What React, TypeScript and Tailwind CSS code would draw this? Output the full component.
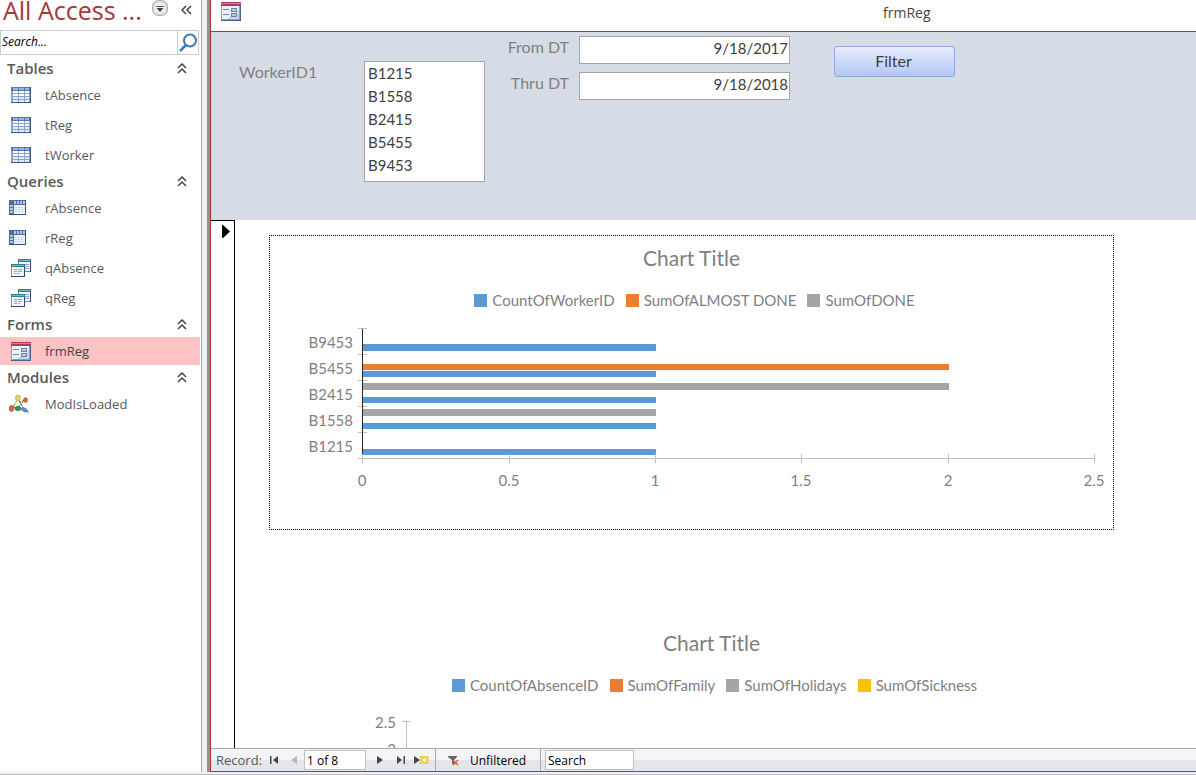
import type { ReactNode } from 'react'

const BLUE = '#5b9bd5'
const ORANGE = '#ed7d31'
const GREY = '#a5a5a5'
const YELLOW = '#ffc000'

function TableIcon() {
  return (
    <svg width="20" height="16" shapeRendering="crispEdges">
      <rect width="20" height="16" fill="#8ba3c7" />
      <rect width="20" height="4" fill="#5677ae" />
      <rect x="2" y="1" width="5" height="2" fill="#9db4db" />
      <rect x="8" y="1" width="5" height="2" fill="#9db4db" />
      <rect x="14" y="1" width="4" height="2" fill="#9db4db" />
      {[4, 7, 10, 13].map((y, i) => (
        <g key={y} fill={i > 1 ? '#e3ebf6' : '#ffffff'}>
          <rect x="2" y={y} width="5" height="2" />
          <rect x="8" y={y} width="5" height="2" />
          <rect x="14" y={y} width="4" height="2" />
        </g>
      ))}
      <rect x="19" width="1" height="16" fill="#3c5785" />
      <rect y="15" width="20" height="1" fill="#3c5785" />
    </svg>
  )
}

function CrosstabIcon() {
  return (
    <svg width="20" height="16" shapeRendering="crispEdges">
      <rect width="17" height="15" fill="#4e6da4" />
      {[5, 8, 11, 14].map(x => <rect key={x} x={x} y="1" width="2" height="3" fill="#b6c7e4" />)}
      {[5, 8, 11].map(y => <rect key={y} x="1" y={y} width="3" height="2" fill="#b6c7e4" />)}
      <rect x="5" y="5" width="11" height="9" fill="#eef3fb" />
      {[6, 9, 12].map(x => [7, 9, 11].map(y => <rect key={x + '-' + y} x={x} y={y} width="2" height="1" fill="#c3d0e8" />))}
      <rect x="16" width="1" height="15" fill="#34517f" />
      <rect y="14" width="17" height="1" fill="#34517f" />
    </svg>
  )
}

function QueryIcon() {
  return (
    <svg width="20" height="18" shapeRendering="crispEdges">
      <rect x="7" width="13" height="13" fill="#6a86b4" />
      <rect x="8" y="3" width="11" height="9" fill="#f3f7fc" />
      <rect x="7" width="13" height="3" fill="#2f8289" />
      <rect x="8" y="1" width="11" height="1" fill="#72b6ba" />
      <path d="M13 5h5v1h-5zM14 7h4v1h-4zM14 9h4v1h-4z" fill="#8ea5cb" />
      <rect x="19" y="3" width="1" height="10" fill="#2f4a78" />
      <rect y="5" width="14" height="13" fill="#7b95bf" />
      <rect x="1" y="8" width="12" height="9" fill="#f3f7fc" />
      <rect y="5" width="14" height="3" fill="#2f8289" />
      <rect x="1" y="6" width="12" height="1" fill="#72b6ba" />
      <path d="M3 10h3v1H3zM7 10h4v1H7zM3 12h3v1H3zM7 12h4v1H7zM3 14h3v1H3zM7 14h2v1H7z" fill="#8ea5cb" />
      <path d="M13 8h1v10H0v-1h13z" fill="#2f4a78" />
    </svg>
  )
}

function FormIcon() {
  return (
    <svg width="20" height="19" shapeRendering="crispEdges">
      <rect width="20" height="19" fill="#8b9dbf" />
      <rect x="1" y="4" width="17" height="13" fill="#edf2fa" />
      <path d="M18 8v9H6z" fill="#c9d7ee" />
      <rect width="20" height="4" fill="#b5365f" />
      <rect y="1" width="20" height="1" fill="#dd7d9b" />
      <rect x="2" y="7" width="6" height="1" fill="#7187b0" />
      <rect x="2" y="12" width="6" height="1" fill="#7187b0" />
      <rect x="10" y="6" width="6" height="4" fill="#6b83ae" />
      <rect x="11" y="7" width="4" height="2" fill="#b9c9e2" />
      <rect x="10" y="11" width="6" height="4" fill="#6b83ae" />
      <rect x="11" y="12" width="4" height="2" fill="#b9c9e2" />
      <path d="M19 4h1v15H0v-1h19z" fill="#4a618b" />
    </svg>
  )
}

function ModuleIcon() {
  return (
    <svg width="20" height="18">
      <path d="M9 4L4 12M9 4l6 10M16 5L9 12M10 7l8-2M4 12l4 1" stroke="#5b5b5b" strokeWidth="1" strokeDasharray="2 1" fill="none" />
      <ellipse cx="9" cy="3" rx="2.500" ry="3" fill="#e6d36a" stroke="#b8a038" strokeWidth=".6" />
      <ellipse cx="16.500" cy="5" rx="2" ry="2.300" fill="#e8603a" stroke="#a53318" strokeWidth=".6" />
      <ellipse cx="2.500" cy="13.500" rx="2.200" ry="3" fill="#e8613c" stroke="#a53318" strokeWidth=".6" />
      <ellipse cx="9" cy="13.500" rx="3" ry="2.200" fill="#2f9a48" stroke="#1e6b30" strokeWidth=".6" />
      <path d="M13 12.500l4 1 2.500 3.500h-4l-3-2z" fill="#5a8fe0" stroke="#2e5fa8" strokeWidth=".5" />
    </svg>
  )
}

function NavGroup({ title, children }: { title: string; children: ReactNode }) {
  return (
    <section>
      <h2 className="flex h-[23px] items-center justify-between pl-[7px] pr-[13px] text-[15px] font-semibold text-[#595959]">
        {title}
        <button type="button" aria-label={'Collapse ' + title}>
          <svg width="10" height="11" fill="none" stroke="#444444" strokeWidth="1.500">
            <path d="M1 5l4-4 4 4M1 10l4-4 4 4" />
          </svg>
        </button>
      </h2>
      <ul>{children}</ul>
    </section>
  )
}

function NavItem({ icon, name, outdent = false, selected = false }: { icon: ReactNode; name: string; outdent?: boolean; selected?: boolean }) {
  return (
    <li className="flex h-[30px] items-center">
      <a href="#" className={`flex h-7 w-full items-center text-[13px] ${selected ? 'bg-[#fdc2c4] text-[#444444]' : 'text-[#595959]'}`}>
        <span className={`flex w-[45px] ${outdent ? 'pl-[9px]' : 'pl-[11px]'}`}>{icon}</span>
        <span className="pt-[2px]">{name}</span>
      </a>
    </li>
  )
}

function Sidebar() {
  return (
    <nav className="w-[200px] shrink-0 overflow-hidden">
      <div className="flex h-[30px] items-start text-[#a4373a]">
        <h1 className="w-[149px] whitespace-nowrap pl-[3px] text-[25px] leading-5">All Access ...</h1>
        <button type="button" aria-label="Object filter" className="w-[24px] pl-[3px]">
          <svg width="17" height="17">
            <rect x=".5" y=".5" width="15" height="15" rx="6" fill="#dcdde2" stroke="#a6a8b0" />
            <rect x="3" y="3" width="10" height="10" rx="4" fill="#f0f1f3" />
            <rect x="4" y="6" width="8" height="1" fill="#555" />
            <path d="M4.500 8h7L8 12z" fill="#444" />
          </svg>
        </button>
        <button type="button" aria-label="Hide navigation pane" className="pl-[8px] pt-[5px]">
          <svg width="11" height="10" fill="none" stroke="#444444" strokeWidth="1.500">
            <path d="M5 1L1 5l4 4M10 1L6 5l4 4" />
          </svg>
        </button>
      </div>
      <div className="mb-[2px] flex h-[25px] w-[199px] border border-[#cccccc]">
        <input aria-label="Search objects" placeholder="Search..." className="min-w-0 flex-1 px-px pb-[2px] text-xs italic placeholder:text-black" />
        <button type="button" aria-label="Search" className="w-[21px] border-l border-[#cccccc]">
          <svg width="20" height="20">
            <circle cx="12" cy="7.500" r="6" fill="none" stroke="#3b78b5" strokeWidth="2" />
            <path d="M8 12l-6 6" stroke="#3b78b5" strokeWidth="2.500" />
          </svg>
        </button>
      </div>
      <NavGroup title="Tables">
        <NavItem icon={<TableIcon />} name="tAbsence" />
        <NavItem icon={<TableIcon />} name="tReg" />
        <NavItem icon={<TableIcon />} name="tWorker" />
      </NavGroup>
      <NavGroup title="Queries">
        <NavItem icon={<CrosstabIcon />} name="rAbsence" outdent />
        <NavItem icon={<CrosstabIcon />} name="rReg" outdent />
        <NavItem icon={<QueryIcon />} name="qAbsence" />
        <NavItem icon={<QueryIcon />} name="qReg" />
      </NavGroup>
      <NavGroup title="Forms">
        <NavItem icon={<FormIcon />} name="frmReg" selected />
      </NavGroup>
      <NavGroup title="Modules">
        <NavItem icon={<ModuleIcon />} name="ModIsLoaded" outdent />
      </NavGroup>
    </nav>
  )
}

const workers = ['B1215', 'B1558', 'B2415', 'B5455', 'B9453']

function FormHeader() {
  const dateInput = 'h-7 w-[211px] border border-[#a6a6a6] bg-white px-px pb-1 text-right text-[15px] text-[#404040]'

  return (
    <form className="flex h-[188px] shrink-0 items-start bg-[#d6dce5] pl-7 font-['Lato',sans-serif] text-base text-[#7f7f7f]">
      <label htmlFor="worker" className="mt-7 w-[125px]">WorkerID1</label>
      <select id="worker" multiple size={5} className="mt-[29px] h-[121px] w-[121px] overflow-hidden border border-[#a6a6a6] bg-white pt-[2px] text-[15px] text-[#404040]">
        {workers.map(w => <option key={w} className="h-[23px] px-[3px] py-0 leading-[23px]">{w}</option>)}
      </select>
      <div className="ml-5 mt-1 grid grid-cols-[64px_211px] gap-x-[10px] gap-y-2">
        <label htmlFor="from" className="whitespace-nowrap text-right leading-[22px]">From DT</label>
        <input id="from" defaultValue="9/18/2017" className={dateInput} />
        <label htmlFor="thru" className="whitespace-nowrap text-right leading-[22px]">Thru DT</label>
        <input id="thru" defaultValue="9/18/2018" className={dateInput} />
      </div>
      <button type="button" className="ml-11 mt-[14px] h-[31px] w-[121px] rounded-[3px] border border-[#8faadc] bg-linear-to-b from-[#e6edfc] to-[#b4c7f5] pb-[2px] pr-[2px] text-[#404040]">
        Filter
      </button>
    </form>
  )
}

function ChartHead({ legend }: { legend: { name: string; color: string }[] }) {
  return (
    <>
      <h3 className="h-11 text-center text-[21px] leading-[43px]">Chart Title</h3>
      <ul className="flex h-10 items-center justify-center gap-[11px] pl-[6px] text-[15px]">
        {legend.map(l => (
          <li key={l.name} className="flex items-center gap-[5px] whitespace-nowrap">
            <span className="size-[13px]" style={{ background: l.color }} />
            {l.name}
          </li>
        ))}
      </ul>
    </>
  )
}

// one unit on the value axis is 293px wide
const bars = [
  { y: 24, value: 1, color: BLUE },
  { y: 44, value: 2, color: ORANGE },
  { y: 51, value: 1, color: BLUE },
  { y: 63, value: 2, color: GREY },
  { y: 77, value: 1, color: BLUE },
  { y: 89, value: 1, color: GREY },
  { y: 103, value: 1, color: BLUE },
  { y: 129, value: 1, color: BLUE },
]
const xTicks = [
  { x: 92, label: '0' },
  { x: 239, label: '0.5' },
  { x: 385, label: '1' },
  { x: 531, label: '1.5' },
  { x: 678, label: '2' },
  { x: 824, label: '2.5' },
]

function WorkerChart() {
  return (
    <div className="w-[845px] border border-dotted border-black">
      <ChartHead legend={[
        { name: 'CountOfWorkerID', color: BLUE },
        { name: 'SumOfALMOST DONE', color: ORANGE },
        { name: 'SumOfDONE', color: GREY },
      ]} />
      <svg width="843" height="209" className="block text-[15px]" fill="#7f7f7f" shapeRendering="crispEdges">
        {bars.map(b => <rect key={b.y} x="93" y={b.y} width={b.value * 293} height={b.color === GREY || b.y === 24 ? 7 : 6} fill={b.color} />)}
        {[8, 34, 60, 86, 112, 138].map(y => <rect key={y} x="88" y={y} width="9" height="1" fill="#bfbfbf" />)}
        <rect x="92" y="9" width="1" height="126" fill="#262626" />
        <rect x="88" y="138" width="737" height="1" fill="#bfbfbf" />
        {xTicks.map(t => (
          <g key={t.label}>
            <rect x={t.x} y="134" width="1" height="9" fill="#bfbfbf" />
            <text x={t.x} y="166" textAnchor="middle">{t.label}</text>
          </g>
        ))}
        {workers.map((w, i) => <text key={w} x="83" y={132 - i * 26} textAnchor="end">{w}</text>)}
      </svg>
    </div>
  )
}

function AbsenceChart() {
  return (
    <div className="ml-5 mt-[90px] w-[845px] border border-transparent">
      <ChartHead legend={[
        { name: 'CountOfAbsenceID', color: BLUE },
        { name: 'SumOfFamily', color: ORANGE },
        { name: 'SumOfHolidays', color: GREY },
        { name: 'SumOfSickness', color: YELLOW },
      ]} />
      <svg width="843" height="209" className="block text-[15px]" fill="#7f7f7f" shapeRendering="crispEdges">
        <rect x="112" y="16" width="9" height="1" fill="#bfbfbf" />
        <rect x="116" y="16" width="1" height="150" fill="#bfbfbf" />
        <text x="106" y="23" textAnchor="end">2.5</text>
        <text x="106" y="50" textAnchor="end">2</text>
      </svg>
    </div>
  )
}

function RecordBar() {
  return (
    <footer className="flex h-[23px] shrink-0 items-stretch border-t border-[#a8a9b4] bg-linear-to-b from-[#f3f4f7] from-50% to-[#e5e6ea] to-50% text-xs text-black">
      <label htmlFor="record" className="flex w-[52px] items-center pl-[5px] pt-[2px] text-[13px] text-[#595959]">Record:</label>
      <button type="button" aria-label="First record" className="flex w-[21px] items-center justify-center">
        <svg width="8" height="8" fill="#444"><path d="M0 0h1.500v8H0zM8 0v8L3 4z" /></svg>
      </button>
      <button type="button" aria-label="Previous record" className="flex w-5 items-center justify-center">
        <svg width="6" height="8" fill="#b5b5b9"><path d="M6 0v8L0 4z" /></svg>
      </button>
      <input id="record" defaultValue="1 of 8" className="mt-px h-5 w-[62px] border border-[#c0c0c0] bg-white px-[2px]" />
      <button type="button" aria-label="Next record" className="flex w-[27px] items-center justify-center">
        <svg width="6" height="8" fill="#444"><path d="M0 0v8l6-4z" /></svg>
      </button>
      <button type="button" aria-label="Last record" className="flex w-4 items-center justify-center">
        <svg width="8" height="8" fill="#444"><path d="M6.500 0H8v8H6.500zM0 0v8l5-4z" /></svg>
      </button>
      <button type="button" aria-label="New record" className="flex w-[26px] items-center justify-center">
        <svg width="16" height="10">
          <path d="M0 1v8l6-4z" fill="#444" />
          <rect x="6" y="1" width="9" height="8" fill="#f4dc7a" />
          <path d="M6 2h9M6 5h9M6 8h9" stroke="#dbb52a" strokeWidth="1" strokeDasharray="2 1" />
          <rect x="9" y="4" width="3" height="2" fill="#fffbe0" />
        </svg>
      </button>
      <button type="button" className="flex w-[106px] items-center gap-[11px] border-x border-[#a8a9b4] pl-3">
        <svg width="11" height="11">
          <path d="M0 1h9v1L6 5v4H4V5L0 2z" fill="#666" />
          <path d="M5 5l5 5M10 5l-5 5" stroke="#d9583b" strokeWidth="1.300" />
        </svg>
        <span className="pt-[2px]">Unfiltered</span>
      </button>
      <input aria-label="Search records" defaultValue="Search" className="ml-1 mt-px h-5 w-[89px] border border-[#c0c0c0] bg-white px-[2px]" />
    </footer>
  )
}

export default function App() {
  return (
    <div className="flex h-screen flex-col overflow-hidden bg-white font-['Open_Sans',sans-serif]">
      <div className="flex min-h-0 flex-1">
        <Sidebar />
        <div className="ml-px w-[9px] shrink-0 border-l border-r-3 border-l-[#a9adb8] border-r-[#929292] bg-[#eff1f4]" />
        <main className="flex min-w-0 flex-1 flex-col border-b border-l border-[#a4373a]">
          <header className="flex h-8 shrink-0 border-b border-[#a4373a] pl-[10px] pt-[2px]">
            <FormIcon />
            <span className="ml-[642px] text-sm leading-[22px] text-[#444444]">frmReg</span>
          </header>
          <FormHeader />
          <div className="flex min-h-0 flex-1 overflow-hidden">
            <div className="w-6 shrink-0 border-r border-t border-black pl-[11px] pt-[4px]">
              <svg width="8" height="13"><path d="M0 0h1l7 6.500L1 13H0z" /></svg>
            </div>
            <div className="flex-1 pl-[34px] pt-[15px] font-['Lato',sans-serif] text-[#7f7f7f]">
              <WorkerChart />
              <AbsenceChart />
            </div>
          </div>
          <RecordBar />
        </main>
      </div>
      <div className="h-[3px] shrink-0 border-b border-[#bdbdbd] bg-[#f0f0f0]" />
    </div>
  )
}
